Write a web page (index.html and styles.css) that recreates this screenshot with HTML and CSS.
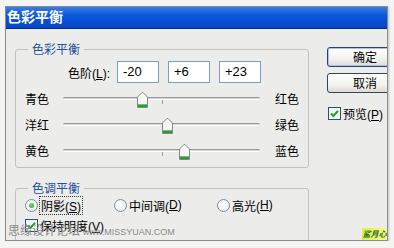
FILE: index.html
```html
<!DOCTYPE html>
<html>
<head>
<meta charset="utf-8">
<link rel="stylesheet" href="styles.css">
</head>
<body>
<div class="window">
  <div class="titlebar">色彩平衡</div>
  <div class="content">
    <div class="left">
      <fieldset class="group g1">
        <legend>色彩平衡</legend>
        <div class="levels">
          <span class="lvl-label">色阶(<u>L</u>):</span>
          <div class="num">-20</div>
          <div class="num">+6</div>
          <div class="num">+23</div>
        </div>
        <div class="srow first">
          <span class="sl">青色</span>
          <div class="track"><span class="tick"></span><span class="thumb" style="left:calc(40% - 5px)"><svg width="11" height="16" viewBox="0 0 11 16"><path d="M0.5 5 L5 0.5 L6 0.5 L10.5 5 V15.5 H0.5 Z" fill="#f6f6f4" stroke="#7e8a84"/><rect x="1" y="12" width="9" height="3" fill="#2f9a3a"/><rect x="1" y="12" width="9" height="1" fill="#6cc070"/></svg></span></div>
          <span class="sr">红色</span>
        </div>
        <div class="srow">
          <span class="sl">洋红</span>
          <div class="track"><span class="tick"></span><span class="thumb" style="left:calc(53% - 5px)"><svg width="11" height="16" viewBox="0 0 11 16"><path d="M0.5 5 L5 0.5 L6 0.5 L10.5 5 V15.5 H0.5 Z" fill="#f6f6f4" stroke="#7e8a84"/><rect x="1" y="12" width="9" height="3" fill="#2f9a3a"/><rect x="1" y="12" width="9" height="1" fill="#6cc070"/></svg></span></div>
          <span class="sr">绿色</span>
        </div>
        <div class="srow">
          <span class="sl">黄色</span>
          <div class="track"><span class="tick"></span><span class="thumb" style="left:calc(61.5% - 5px)"><svg width="11" height="16" viewBox="0 0 11 16"><path d="M0.5 5 L5 0.5 L6 0.5 L10.5 5 V15.5 H0.5 Z" fill="#f6f6f4" stroke="#7e8a84"/><rect x="1" y="12" width="9" height="3" fill="#2f9a3a"/><rect x="1" y="12" width="9" height="1" fill="#6cc070"/></svg></span></div>
          <span class="sr">蓝色</span>
        </div>
      </fieldset>
      <fieldset class="group g2">
        <legend>色调平衡</legend>
        <div class="radios">
          <span class="radio-item r1"><span class="radio on"></span><span class="focus">阴影(<u>S</u>)</span></span>
          <span class="radio-item r2"><span class="radio"></span>中间调(<u>D</u>)</span>
          <span class="radio-item r3"><span class="radio"></span>高光(<u>H</u>)</span>
        </div>
        <div class="check-row">
          <svg class="cb" width="13" height="13" viewBox="0 0 13 13"><rect x="0.5" y="0.5" width="12" height="12" fill="#f4f4f0" stroke="#2a4f7c"/><path d="M3 6.5 L5.3 9 L10 3.8" fill="none" stroke="#21a121" stroke-width="2"/></svg>
          <span>保持明度(<u>V</u>)</span>
        </div>
      </fieldset>
    </div>
    <div class="right">
      <div class="btn default">确定</div>
      <div class="btn">取消</div>
      <div class="check-row preview">
        <svg class="cb" width="13" height="13" viewBox="0 0 13 13"><rect x="0.5" y="0.5" width="12" height="12" fill="#f4f4f0" stroke="#2a4f7c"/><path d="M3 6.5 L5.3 9 L10 3.8" fill="none" stroke="#21a121" stroke-width="2"/></svg>
        <span>预览(<u>P</u>)</span>
      </div>
    </div>
  </div>
  <div class="watermark">思缘设计论坛 <span class="wm-url">www.MISSYUAN.COM</span></div>
  <div class="badge">鲨月心</div>
</div>
</body>
</html>
```
FILE: styles.css
```css
* { box-sizing: border-box; }
body {
  margin: 0;
  background: #f4f4f2;
  font-family: "Liberation Sans", "Noto Sans CJK SC", sans-serif;
  font-size: 12px;
  color: #000;
}
.window {
  position: relative;
  margin: 6px 0 0 5px;
  width: 383px;
  height: 235px;
  border: 1px solid #8c8c8c;
  background: #ececea;
  overflow: hidden;
  box-shadow: 1px 1px 2px rgba(0,0,0,0.2);
}
.titlebar {
  height: 22px;
  background: linear-gradient(#3a7ce6, #0a56dc 40%, #0646c6);
  border-bottom: 1px solid #0a2c86;
  color: #fff;
  font-weight: bold;
  font-size: 14px;
  line-height: 19px;
  padding-left: 1px;
  font-family: "Noto Sans CJK SC", sans-serif;
}
.content {
  display: flex;
  padding: 12px 0 0 9px;
}
.left { width: 294px; }
.group {
  margin: 0;
  border: 1px solid #c2c2ba;
  border-radius: 3px;
  padding: 4px 0 4px 9px;
  width: 294px;
}
.group legend {
  margin-left: 3px;
  padding: 0 4px;
  color: #1f4f9f;
  font-size: 12px;
  line-height: 16px;
  font-family: "Noto Sans CJK SC", sans-serif;
}
.levels {
  display: flex;
  align-items: center;
  height: 22px;
}
.lvl-label {
  width: 85px;
  text-align: right;
  margin-right: 7px;
}
.num {
  width: 42px;
  height: 22px;
  border: 1px solid #7f9db9;
  background: #fff;
  padding-left: 5px;
  font-size: 13px;
  line-height: 20px;
}
.num + .num { margin-left: 9px; }
.srow {
  display: flex;
  align-items: center;
  height: 26px;
}
.srow.first { margin-top: 2px; }
.sl { width: 38px; }
.sr { margin-left: 15px; }
.track {
  position: relative;
  width: 197px;
  height: 3px;
  border-top: 1px solid #9a9a9a;
  border-bottom: 1px solid #fdfdfd;
  background: #d6d6d2;
  border-radius: 2px;
}
.tick {
  position: absolute;
  left: 50%;
  top: 2px;
  width: 1px;
  height: 4px;
  background: #9a9a9a;
}
.thumb {
  position: absolute;
  top: -6px;
  width: 11px;
  height: 16px;
  display: block;
}
.thumb svg { display: block; }
.g2 { margin-top: 12px; padding: 1px 0 12px 9px; }
.radios {
  display: flex;
  align-items: center;
  height: 16px;
}
.radio-item {
  display: flex;
  align-items: center;
}
.r1 { width: 89px; }
.r2 { width: 103px; }
.radio {
  width: 13px;
  height: 13px;
  border-radius: 50%;
  border: 1px solid #7b8ba6;
  background: radial-gradient(circle at 40% 40%, #ffffff, #e6e6e0);
  margin-right: 2px;
  position: relative;
}
.radio.on::after {
  content: "";
  position: absolute;
  left: 3px;
  top: 3px;
  width: 5px;
  height: 5px;
  border-radius: 50%;
  background: radial-gradient(circle at 40% 40%, #7fd47f, #259b25);
}
.focus {
  outline: 1px dotted #333;
  outline-offset: 0;
  padding: 0 1px;
}
.check-row {
  display: flex;
  align-items: center;
  height: 16px;
  margin-top: 4px;
}
.cb { display: block; margin-right: 2px; flex: none; }
.right { margin-left: 18px; margin-top: 6px; }
.btn {
  width: 76px;
  height: 20px;
  border: 1px solid #2b4766;
  border-radius: 3px;
  background: linear-gradient(#ffffff, #f2f2ee 60%, #dedbd2);
  text-align: center;
  line-height: 18px;
  font-family: "Noto Sans CJK SC", sans-serif;
  margin-bottom: 6px;
}
.btn.default {
  box-shadow: inset 0 0 0 1px #a9c3ec;
}
.preview { margin-top: 12px; margin-left: 1px; }
.watermark {
  position: absolute;
  left: 2px;
  top: 216px;
  color: #8a8a8a;
  font-family: "Noto Sans CJK SC", sans-serif;
  font-size: 12px;
  line-height: 14px;
  white-space: nowrap;
}
.wm-url {
  font-family: "Liberation Sans", sans-serif;
  font-size: 9px;
}
.badge {
  position: absolute;
  right: 0;
  bottom: 0;
  width: 25px;
  height: 12px;
  background: linear-gradient(90deg, #e8ee3a, #f6f88a);
  color: #0b6a3a;
  font-size: 8px;
  line-height: 12px;
  font-weight: bold;
  font-style: italic;
  text-align: center;
  font-family: "Noto Sans CJK SC", sans-serif;
}
```
